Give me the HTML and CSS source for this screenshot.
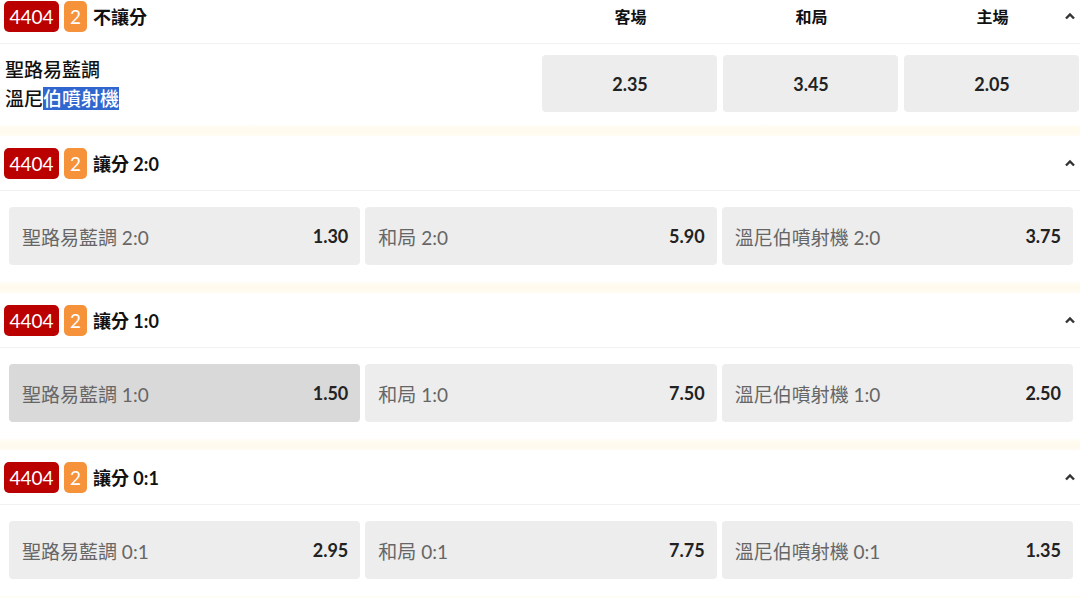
FILE: index.html
```html
<!DOCTYPE html>
<html lang="zh-Hant">
<head>
<meta charset="utf-8">
<link rel="stylesheet" href="styles.css">
</head>
<body>
<div class="page">
  <section class="market first">
    <div class="mhead">
      <span class="code">4404</span><span class="num">2</span><span class="title">不讓分</span>
      <div class="cols"><span>客場</span><span>和局</span><span>主場</span></div>
      <svg class="caret" viewBox="0 0 12 8" width="12" height="8"><path d="M2 6.5 L6 2.5 L10 6.5" fill="none" stroke="#333" stroke-width="2.4"/></svg>
    </div>
    <div class="mbody hdp">
      <div class="teams"><div>聖路易藍調</div><div>溫尼<span class="sel">伯噴射機</span></div></div>
      <div class="odd c">2.35</div>
      <div class="odd c">3.45</div>
      <div class="odd c">2.05</div>
    </div>
  </section>
  <div class="gap"></div>
  <section class="market">
    <div class="mhead">
      <span class="code">4404</span><span class="num">2</span><span class="title">讓分 2:0</span>
      <svg class="caret" viewBox="0 0 12 8" width="12" height="8"><path d="M2 6.5 L6 2.5 L10 6.5" fill="none" stroke="#333" stroke-width="2.4"/></svg>
    </div>
    <div class="mbody grid3">
      <div class="odd"><span class="lbl">聖路易藍調 2:0</span><span class="val">1.30</span></div>
      <div class="odd"><span class="lbl">和局 2:0</span><span class="val">5.90</span></div>
      <div class="odd"><span class="lbl">溫尼伯噴射機 2:0</span><span class="val">3.75</span></div>
    </div>
  </section>
  <div class="gap"></div>
  <section class="market">
    <div class="mhead">
      <span class="code">4404</span><span class="num">2</span><span class="title">讓分 1:0</span>
      <svg class="caret" viewBox="0 0 12 8" width="12" height="8"><path d="M2 6.5 L6 2.5 L10 6.5" fill="none" stroke="#333" stroke-width="2.4"/></svg>
    </div>
    <div class="mbody grid3">
      <div class="odd active"><span class="lbl">聖路易藍調 1:0</span><span class="val">1.50</span></div>
      <div class="odd"><span class="lbl">和局 1:0</span><span class="val">7.50</span></div>
      <div class="odd"><span class="lbl">溫尼伯噴射機 1:0</span><span class="val">2.50</span></div>
    </div>
  </section>
  <div class="gap"></div>
  <section class="market">
    <div class="mhead">
      <span class="code">4404</span><span class="num">2</span><span class="title">讓分 0:1</span>
      <svg class="caret" viewBox="0 0 12 8" width="12" height="8"><path d="M2 6.5 L6 2.5 L10 6.5" fill="none" stroke="#333" stroke-width="2.4"/></svg>
    </div>
    <div class="mbody grid3">
      <div class="odd"><span class="lbl">聖路易藍調 0:1</span><span class="val">2.95</span></div>
      <div class="odd"><span class="lbl">和局 0:1</span><span class="val">7.75</span></div>
      <div class="odd"><span class="lbl">溫尼伯噴射機 0:1</span><span class="val">1.35</span></div>
    </div>
  </section>
  <div class="gap"></div>
</div>
</body>
</html>
```
FILE: styles.css
```css
html, body {
  margin: 0;
  padding: 0;
  background: #fff;
  overflow: hidden;
}
body {
  font-family: Lato, "Noto Sans CJK TC", sans-serif;
  color: #111;
}
.page {
  width: 1080px;
  margin-top: -11px;
}
.market {
  background: #fff;
}
.mhead {
  height: 54px;
  border-bottom: 1px solid #f1f1f1;
  display: flex;
  align-items: center;
  padding-left: 4px;
  box-sizing: content-box;
}
.code {
  background: #bb0000;
  color: #fff;
  font-size: 19px;
  height: 31px;
  line-height: 31px;
  width: 55px;
  text-align: center;
  border-radius: 5px;
}
.num {
  background: #f5923a;
  color: #fff;
  font-size: 19px;
  height: 31px;
  line-height: 31px;
  width: 23px;
  text-align: center;
  border-radius: 5px;
  margin-left: 5px;
}
.title {
  margin-left: 6px;
  font-size: 18px;
  font-weight: 700;
  color: #111;
}
.cols {
  margin-left: auto;
  display: grid;
  grid-template-columns: repeat(3, 175px);
  column-gap: 6px;
  font-size: 16px;
  font-weight: 700;
  text-align: center;
  margin-right: -16px;
}
.caret {
  margin-left: auto;
  margin-right: 4px;
}
.first .cols + .caret {
  margin-left: 0;
}
.mbody {
  padding: 16px 7px 17px 9px;
}
.hdp {
  display: grid;
  grid-template-columns: 1fr 175px 175px 175px;
  column-gap: 6px;
  padding: 11px 1px 12px 5px;
  align-items: start;
}
.teams {
  font-size: 19px;
  font-weight: 500;
  line-height: 29px;
  color: #111;
}
.sel {
  background: #2f67cf;
  color: #fff;
}
.grid3 {
  display: grid;
  grid-template-columns: repeat(3, 1fr);
  column-gap: 5px;
}
.odd {
  background: #ededed;
  border-radius: 4px;
  height: 58px;
  display: flex;
  align-items: center;
  justify-content: space-between;
  padding: 0 12px 0 13px;
  font-size: 19px;
}
.odd.c {
  justify-content: center;
  height: 57px;
  font-weight: 700;
  color: #222;
  font-size: 18px;
}
.odd.active {
  background: #d9d9d9;
}
.lbl {
  color: #666;
}
.val {
  color: #222;
  font-weight: 700;
  font-size: 18px;
}
.gap {
  height: 11px;
  background: linear-gradient(#fffdf6, #fffaec 50%, #fffcf4);
}
```
